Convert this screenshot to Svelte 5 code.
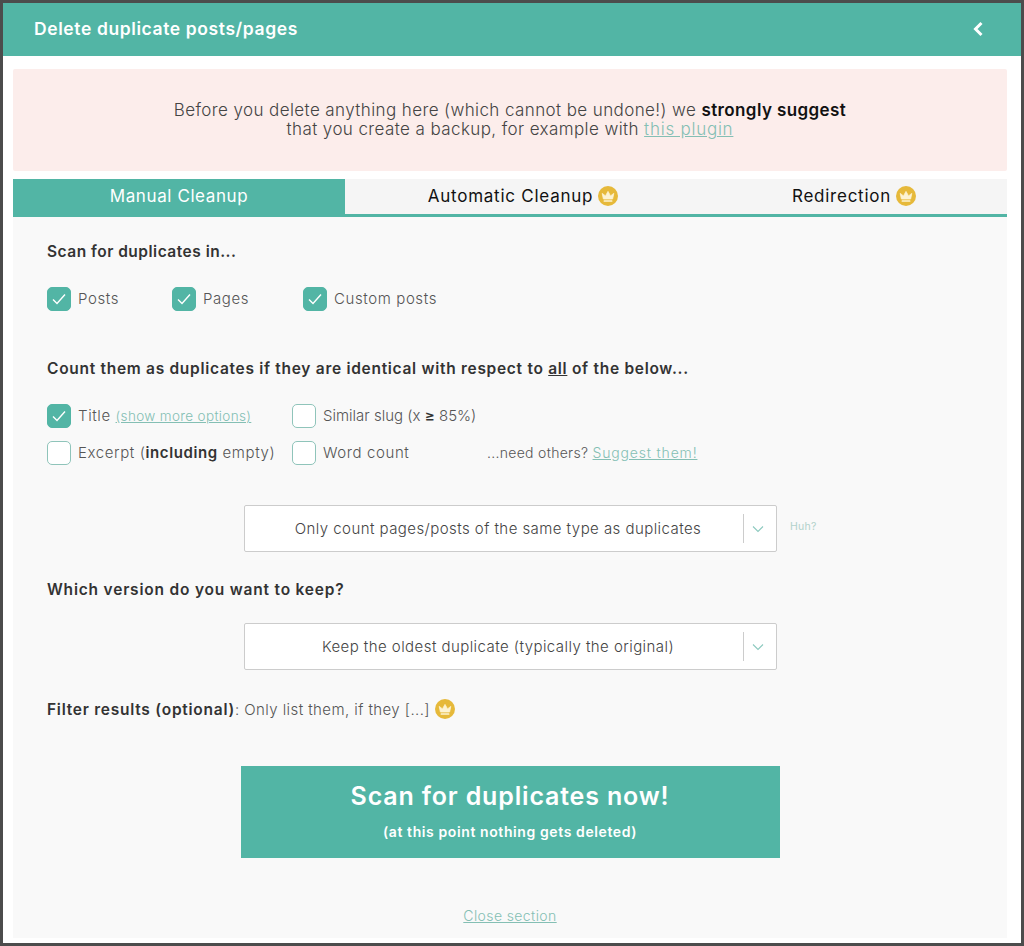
<script>
  const scanTypes = ['Posts', 'Pages', 'Custom posts'];
</script>

{#snippet crown(size)}
  <svg class="crown" width={size} height={size} viewBox="0 0 20 20">
    <circle cx="10" cy="10" r="10" fill="#e6b93a" />
    <path d="M4.2 7.4l3.3 2.5L10 5.4l2.5 4.5 3.3-2.5-1.2 5.6H5.4z" fill="#fdf3d2" stroke="#fdf3d2" stroke-width="0.8" stroke-linejoin="round" />
    <rect x="5.6" y="14.2" width="8.8" height="1.5" rx="0.5" fill="#fdf3d2" />
  </svg>
{/snippet}

{#snippet check(on)}
  <span class="box" class:on>
    {#if on}
      <svg width="16" height="12" viewBox="0 0 16 12" fill="none">
        <path d="M2 6.5l4 4 8-9" stroke="#fff" stroke-width="1.4" />
      </svg>
    {/if}
  </span>
{/snippet}

{#snippet caret()}
  <span class="sep"></span>
  <svg class="caret" width="12" height="8" viewBox="0 0 12 8" fill="none">
    <path d="M1 1.5l5 5 5-5" stroke="#8cc9bf" stroke-width="1.1" />
  </svg>
{/snippet}

<div class="frame">
  <header class="top">
    <h1>Delete duplicate posts/pages</h1>
    <svg width="12" height="16" viewBox="0 0 12 16" fill="none">
      <path d="M9.5 2L3.5 8l6 6" stroke="#fff" stroke-width="3" />
    </svg>
  </header>

  <div class="page">
    <div class="notice">
      Before you delete anything here (which cannot be undone!) we <b>strongly suggest</b><br />
      that you create a backup, for example with <a href="#top">this plugin</a>
    </div>

    <nav class="tabs">
      <div class="tab active">Manual Cleanup</div>
      <div class="tab">Automatic Cleanup {@render crown(20)}</div>
      <div class="tab">Redirection {@render crown(20)}</div>
    </nav>

    <section class="panel">
      <h2 class="scan-title">Scan for duplicates in...</h2>
      <div class="scan-row">
        {#each scanTypes as label}
          <label class="opt">{@render check(true)}<span>{label}</span></label>
        {/each}
      </div>

      <h2 class="count-title">Count them as duplicates if they are identical with respect to <u>all</u> of the below...</h2>
      <div class="count-grid">
        <label class="opt">{@render check(true)}<span>Title <a class="small" href="#top">(show more options)</a></span></label>
        <label class="opt slug">{@render check(false)}<span>Similar slug (x <b>≥</b> 85%)</span></label>
        <span></span>
        <label class="opt">{@render check(false)}<span>Excerpt (<b>including</b> empty)</span></label>
        <label class="opt">{@render check(false)}<span>Word count</span></label>
        <span class="others">...need others? <a href="#top">Suggest them!</a></span>
      </div>

      <div class="select-row first">
        <div class="select"><span class="value">Only count pages/posts of the same type as duplicates</span>{@render caret()}</div>
        <a class="huh" href="#top">Huh?</a>
      </div>

      <h2 class="keep-title">Which version do you want to keep?</h2>
      <div class="select-row">
        <div class="select"><span class="value">Keep the oldest duplicate (typically the original)</span>{@render caret()}</div>
      </div>

      <p class="filter"><b>Filter results (optional)</b>: Only list them, if they [...] {@render crown(20)}</p>

      <div class="cta">
        <strong>Scan for duplicates now!</strong>
        <small>(at this point nothing gets deleted)</small>
      </div>

      <a class="close" href="#top">Close section</a>
    </section>
  </div>
</div>

<style>
  :global(body) {
    margin: 0;
    background: #4c4c4c;
  }
  .frame {
    box-sizing: border-box;
    width: 1024px;
    height: 946px;
    border: 3px solid #4c4c4c;
    background: #fff;
    font-family: Inter, "Liberation Sans", sans-serif;
    color: #555;
    font-size: 15px;
    overflow: hidden;
  }
  a {
    color: #84bfb4;
  }
  b {
    color: #333;
    font-weight: 600;
  }
  .top {
    height: 53px;
    box-sizing: border-box;
    padding: 0 37px 2px 31px;
    background: #52b5a5;
    display: flex;
    align-items: center;
    justify-content: space-between;
  }
  .top h1 {
    margin: 0;
    color: #fff;
    font-size: 17.5px;
    font-weight: 600;
    letter-spacing: 0.6px;
  }
  .page {
    padding: 13px 14px 0 10px;
  }
  .notice {
    height: 102px;
    box-sizing: border-box;
    padding-top: 32px;
    background: #fcedeb;
    border-radius: 2px;
    text-align: center;
    font-size: 17px;
    line-height: 19px;
    font-weight: 300;
    letter-spacing: 0.4px;
    color: #444;
  }
  .notice a {
    letter-spacing: 0.75px;
  }
  .notice b {
    color: #111;
    font-weight: 600;
  }
  .tabs {
    margin-top: 8px;
    height: 38px;
    box-sizing: border-box;
    display: grid;
    grid-template-columns: 332px 356px 306px;
    background: #f5f5f5;
    border-bottom: 3px solid #52b5a5;
  }
  .tab {
    display: flex;
    align-items: center;
    justify-content: center;
    gap: 5px;
    padding-bottom: 1px;
    font-size: 17px;
    letter-spacing: 0.75px;
    color: #111;
    white-space: nowrap;
  }
  .tab.active {
    background: #52b5a5;
    color: #fff;
    margin-bottom: -3px;
    padding-bottom: 4px;
    letter-spacing: 0.6px;
  }
  .crown {
    display: inline-block;
    vertical-align: middle;
    flex: none;
  }
  .panel {
    background: #f9f9f9;
    height: 721px;
    box-sizing: border-box;
    padding: 25px 34px 0;
    display: flex;
    flex-direction: column;
  }
  h2 {
    margin: 0;
    font-size: 15.5px;
    line-height: 20px;
    font-weight: 600;
    color: #333;
    letter-spacing: 0.71px;
  }
  .scan-title {
    letter-spacing: 0.5px;
  }
  .scan-row {
    display: flex;
    margin-top: 24px;
  }
  .scan-row .opt:nth-child(1) { width: 125px; }
  .scan-row .opt:nth-child(2) { width: 131px; }
  .opt {
    display: flex;
    align-items: center;
    gap: 7px;
    height: 25px;
    white-space: nowrap;
    font-weight: 300;
    letter-spacing: 0.6px;
    color: #555;
  }
  .opt.slug {
    letter-spacing: 0;
  }
  .box {
    box-sizing: border-box;
    flex: none;
    width: 24px;
    height: 24px;
    border-radius: 5px;
    border: 1px solid #8fc4ba;
    background: #fff;
    display: flex;
    align-items: center;
    justify-content: center;
  }
  .box.on {
    background: #52b5a5;
    border-color: #52b5a5;
  }
  .count-title {
    margin-top: 48px;
  }
  .count-grid {
    margin-top: 24px;
    display: grid;
    grid-template-columns: 245px 195px 1fr;
    row-gap: 12px;
  }
  .small {
    font-size: 13.5px;
    letter-spacing: 0.35px;
  }
  .others {
    font-size: 14px;
    font-weight: 300;
    letter-spacing: 0.3px;
    align-self: center;
    color: #555;
  }
  .others a {
    letter-spacing: 0.83px;
  }
  .select-row {
    display: flex;
    align-items: center;
    margin-left: 197px;
    gap: 13px;
  }
  .select-row.first {
    margin-top: 40px;
  }
  .select {
    box-sizing: border-box;
    width: 533px;
    height: 47px;
    background: #fff;
    border: 1px solid #ccc;
    border-radius: 2px;
    display: flex;
    align-items: center;
    font-weight: 300;
    letter-spacing: 0.44px;
    color: #444;
  }
  .value {
    flex: 1;
    padding-left: 8px;
    text-align: center;
  }
  .sep {
    width: 1px;
    height: 29px;
    background: #ccc;
  }
  .caret {
    margin: 0 12px 0 8px;
  }
  .huh {
    font-size: 10.5px;
    letter-spacing: 0.3px;
    text-decoration: none;
    color: #b2d2cb;
    margin-top: -5px;
  }
  .keep-title {
    margin-top: 28px;
    margin-bottom: 23px;
    letter-spacing: 0.8px;
  }
  .filter {
    margin: 28px 0 0;
    display: flex;
    align-items: center;
    height: 22px;
    font-weight: 300;
    letter-spacing: 0.42px;
    white-space: pre;
  }
  .filter b {
    font-size: 15.5px;
    letter-spacing: 0.75px;
  }
  .cta {
    align-self: center;
    margin-top: 46px;
    width: 539px;
    height: 92px;
    box-sizing: border-box;
    padding-bottom: 4px;
    background: #52b5a5;
    color: #fff;
    display: flex;
    flex-direction: column;
    align-items: center;
    justify-content: center;
    gap: 12px;
  }
  .cta strong {
    font-size: 25px;
    font-weight: 600;
    letter-spacing: 0.83px;
  }
  .cta small {
    font-size: 14px;
    font-weight: 600;
    letter-spacing: 0.6px;
  }
  .close {
    align-self: center;
    margin-top: 49px;
    font-size: 14px;
    font-weight: 300;
    letter-spacing: 0.4px;
  }
</style>
